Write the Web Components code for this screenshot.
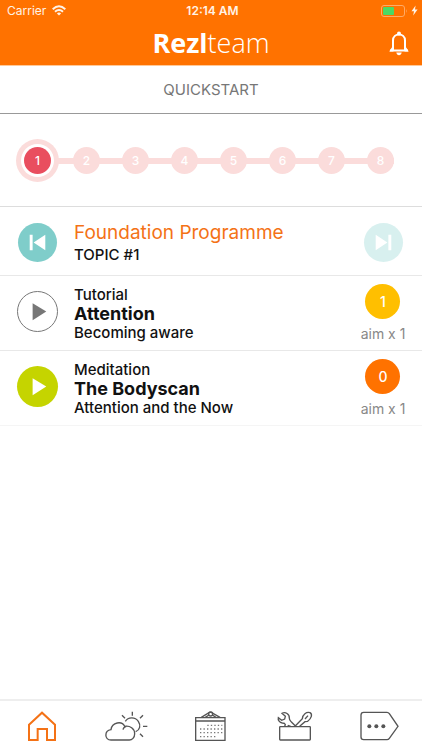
<!DOCTYPE html>
<html lang="en">
<head>
<meta charset="utf-8">
<meta name="viewport" content="width=device-width, initial-scale=1">
<title>Rezl team</title>
<style>
  html, body {
    height: 100%;
    margin: 0;
  }

  body {
    background: #fff;
    color: #111;
    font-family: Inter, "Open Sans", sans-serif;
  }
</style>
</head>
<body>

<rezl-app>
  <rezl-status slot="top" carrier="Carrier" time="12:14 AM"></rezl-status>
  <rezl-header slot="top"></rezl-header>

  <rezl-title>QUICKSTART</rezl-title>
  <rezl-steps count="8" current="1"></rezl-steps>

  <rezl-row topic>
    <rezl-round slot="start" icon="prev" label="Previous topic"></rezl-round>
    <span slot="heading">Foundation Programme</span>
    <span slot="detail">TOPIC #1</span>
    <rezl-round slot="end" icon="next" label="Next topic" faded></rezl-round>
  </rezl-row>

  <rezl-row>
    <rezl-round slot="start" icon="play" label="Play Attention" variant="outline"></rezl-round>
    <span slot="kind">Tutorial</span>
    <span slot="name">Attention</span>
    <span slot="detail">Becoming aware</span>
    <rezl-aim slot="end" count="1" color="#ffbf00">aim x 1</rezl-aim>
  </rezl-row>

  <rezl-row last>
    <rezl-round slot="start" icon="play" label="Play The Bodyscan" variant="lime"></rezl-round>
    <span slot="kind">Meditation</span>
    <span slot="name">The Bodyscan</span>
    <span slot="detail">Attention and the Now</span>
    <rezl-aim slot="end" count="0" color="#ff7200">aim x 1</rezl-aim>
  </rezl-row>

  <rezl-tabs slot="bottom" current="home"></rezl-tabs>
</rezl-app>

<script>
  class RezlElement extends HTMLElement {
    constructor() {
      super();
      this.attachShadow({ mode: 'open' });
    }

    connectedCallback() {
      this.shadowRoot.innerHTML = this.template();
    }
  }

  // Page frame: coloured top, scrolling content, tab bar
  class RezlApp extends RezlElement {
    template() {
      return `
        <style>
          :host {
            display: flex;
            flex-direction: column;
            min-height: 100%;
          }

          header {
            background: #ff7200;
            border-bottom: 1px solid #ffc998;
          }

          main {
            flex: 1;
          }
        </style>
        <header><slot name="top"></slot></header>
        <main><slot></slot></main>
        <slot name="bottom"></slot>
      `;
    }
  }

  class RezlStatus extends RezlElement {
    template() {
      return `
        <style>
          :host {
            display: grid;
            grid-template-columns: 1fr auto 1fr;
            align-items: center;
            height: 21px;
            padding: 0 4px 0 7px;
            color: #fff2e6;
            font-size: 12px;
          }

          .carrier, .power {
            display: flex;
            align-items: center;
            gap: 6px;
          }

          .power {
            justify-content: flex-end;
            gap: 3px;
          }

          .time {
            font-weight: 600;
          }
        </style>
        <span class="carrier">
          ${this.getAttribute('carrier')}
          <svg width="14" height="11" viewBox="0 0 14 11" fill="none" stroke="currentColor" stroke-width="2" aria-hidden="true">
            <path d="M0.7 4.2Q7 -1.6 13.3 4.2M3 6.7Q7 3.2 11 6.7"/>
            <path d="M4.9 8.4Q7 6.7 9.1 8.4L7 10.6Z" fill="currentColor" stroke="none"/>
          </svg>
        </span>
        <span class="time">${this.getAttribute('time')}</span>
        <span class="power">
          <svg width="27" height="12" viewBox="0 0 27 12" aria-hidden="true">
            <rect x="0.5" y="0.5" width="23" height="11" rx="2.5" fill="none" stroke="#ffab66"/>
            <rect x="2" y="2" width="11" height="8" rx="1" fill="#4cd964"/>
            <path d="M25 4Q26.5 6 25 8Z" fill="#ffab66"/>
          </svg>
          <svg width="7" height="11" viewBox="0 0 7 11" fill="currentColor" aria-hidden="true">
            <path d="M4.6 0.5L0.5 6.2H3L2.2 10.5L6.6 4.6H4Z"/>
          </svg>
        </span>
      `;
    }
  }

  class RezlHeader extends RezlElement {
    template() {
      return `
        <style>
          :host {
            display: grid;
            grid-template-columns: 1fr auto 1fr;
            align-items: center;
            height: 44px;
            padding: 0 12px;
            color: #fff;
          }

          .logo {
            grid-column: 2;
            font-family: "Open Sans", sans-serif;
            font-size: 27px;
            font-weight: 300;
            line-height: 44px;
          }

          b {
            font-weight: 700;
          }

          button {
            justify-self: end;
            display: flex;
            padding: 0;
            border: 0;
            background: none;
            color: inherit;
          }
        </style>
        <div class="logo"><b>Rezl</b>team</div>
        <button type="button" aria-label="Notifications">
          <svg width="22" height="25" viewBox="0 0 22 25" fill="none" stroke="currentColor" stroke-width="2">
            <path d="M2 19.5H20M5 19V9.5C5 1.5 17 1.5 17 9.5V19"/>
            <path d="M4.8 15L1.2 20.5H5.5ZM17.2 15L20.8 20.5H16.5Z" fill="currentColor" stroke="none"/>
            <circle cx="11" cy="2.6" r="2" fill="currentColor" stroke="none"/>
            <path d="M8.3 21.6H13.7C13.4 25 8.6 25 8.3 21.6Z" fill="currentColor" stroke="none"/>
          </svg>
        </button>
      `;
    }
  }

  class RezlTitle extends RezlElement {
    template() {
      return `
        <style>
          :host {
            display: block;
            border-bottom: 1px solid #999;
          }

          h1 {
            margin: 0;
            padding-top: 1px;
            color: #777;
            font-size: 15px;
            font-weight: 400;
            line-height: 46px;
            text-align: center;
          }
        </style>
        <h1><slot></slot></h1>
      `;
    }
  }

  class RezlSteps extends RezlElement {
    template() {
      const count   = Number(this.getAttribute('count'));
      const current = Number(this.getAttribute('current'));
      const steps   = Array.from({ length: count }, (_, i) => i + 1);

      return `
        <style>
          :host {
            --step-pale: #fbdcdb;

            display: block;
            padding: 33px 28px 32px 24px;
            border-bottom: 1px solid #ddd;
          }

          ol {
            display: flex;
            justify-content: space-between;
            margin: 0;
            padding: 0;
            background: linear-gradient(var(--step-pale), var(--step-pale)) center / 100% 6px no-repeat;
            list-style: none;
          }

          button {
            display: block;
            width: 27px;
            height: 27px;
            padding: 0;
            border: 0;
            border-radius: 50%;
            background: var(--step-pale);
            color: #fff;
            font: 500 12px/27px Inter, sans-serif;
          }

          button[aria-current] {
            background: #e94e5f;
            box-shadow: 0 0 0 3px #fff, 0 0 0 8px var(--step-pale);
          }
        </style>
        <ol>
          ${steps.map((n) => `
            <li><button type="button" ${n === current ? 'aria-current="step"' : ''}>${n}</button></li>
          `).join('')}
        </ol>
      `;
    }
  }

  class RezlRow extends RezlElement {
    template() {
      return `
        <style>
          :host {
            display: grid;
            grid-template-columns: 42px 1fr 46px;
            align-items: center;
            column-gap: 16px;
            padding: 8px 16px 7px;
            border-bottom: 1px solid #e8e8e8;
          }

          :host([topic]) {
            padding: 14px 16px 11px;
          }

          :host([last]) {
            border-color: #f5f5f5;
          }

          .text {
            display: grid;
            font-size: 15px;
            font-weight: 500;
            line-height: 19px;
          }

          slot[name="heading"] {
            color: #f47216;
            font-size: 19px;
            font-weight: 400;
            line-height: 24px;
          }

          slot[name="name"] {
            font-size: 18px;
            font-weight: 700;
          }

          ::slotted([slot="start"]), ::slotted([slot="end"]) {
            justify-self: center;
          }
        </style>
        <slot name="start"></slot>
        <div class="text">
          <slot name="kind"></slot>
          <slot name="heading"></slot>
          <slot name="name"></slot>
          <slot name="detail"></slot>
        </div>
        <slot name="end"></slot>
      `;
    }
  }

  const ROUND_ICONS = {
    play: '<path d="M15 11.5L29 20L15 29Z"/>',
    prev: '<path d="M12 12H15V28H12ZM28 12V28L16 20Z"/>',
    next: '<path d="M25 12H28V28H25ZM12 12V28L24 20Z"/>',
  };

  class RezlRound extends RezlElement {
    template() {
      return `
        <style>
          :host {
            display: block;
          }

          :host([variant]) {
            padding-bottom: 4px;
          }

          button {
            box-sizing: border-box;
            display: grid;
            place-items: center;
            width: 39px;
            height: 39px;
            padding: 0;
            border: 0;
            border-radius: 50%;
            background: #7fcdca;
            color: #fff;
          }

          :host([variant]) button {
            width: 41px;
            height: 41px;
          }

          :host([variant="outline"]) button {
            border: 1px solid #777;
            background: #fff;
            color: #777;
          }

          :host([variant="lime"]) button {
            background: #c5d400;
          }

          :host([faded]) button {
            background: #d8f0ef;
          }
        </style>
        <button type="button" aria-label="${this.getAttribute('label')}">
          <svg width="39" height="39" viewBox="0 0 40 40" fill="currentColor">${ROUND_ICONS[this.getAttribute('icon')]}</svg>
        </button>
      `;
    }
  }

  class RezlAim extends RezlElement {
    template() {
      return `
        <style>
          :host {
            display: grid;
            justify-items: center;
            gap: 6px;
            color: #888;
            font-size: 14px;
            line-height: 18px;
            white-space: nowrap;
          }

          .count {
            width: 35px;
            border-radius: 50%;
            background: ${this.getAttribute('color')};
            color: #fff;
            font-size: 14px;
            font-weight: 500;
            line-height: 35px;
            text-align: center;
          }
        </style>
        <span class="count">${this.getAttribute('count')}</span>
        <span><slot></slot></span>
      `;
    }
  }

  // Icons are drawn on a grid three times their display size
  const TABS = [
    {
      id: 'home', label: 'Home', width: 28, height: 30,
      art: '<path d="M3 41L42 5L81 41V87H57V54H29V87H3Z" stroke-width="6"/>',
    },
    {
      id: 'weather', label: 'Weather', width: 43, height: 30,
      art: `
        <path d="M18 87C-2 87 -3 59 18 56C21 33 51 29 59 46C75 43 89 53 89 68C89 80 81 87 73 87Z"/>
        <path d="M54 56C55 50 59 47 64 46M61 31C69 17 91 17 100 31C108 43 105 57 92 62"/>
        <path d="M82 2V14M51 13L60 22M114 13L105 22M114 46H127M105 68L114 77"/>
      `,
    },
    {
      id: 'calendar', label: 'Calendar', width: 31, height: 30,
      art: `
        <path d="M2 20H90V88H2ZM2 30H90M19 19L43 4H49L75 19M31 19L42 12M63 19L52 12"/>
        <circle cx="47" cy="9" r="6"/>
        <path d="M37 43H82M15 54H82M15 65H82M15 77H62" stroke-width="4" stroke-dasharray="4 6.5" opacity="0.8"/>
      `,
    },
    {
      id: 'tools', label: 'Tools', width: 36, height: 30,
      art: `
        <rect x="8" y="47" width="92" height="40" rx="2"/>
        <path d="M23 46L25 41C24 37 20 36 16 36C8 35 2 28 4 20L14 28L23 24L25 16L15 7C25 1 38 9 37 22C37 28 41 30 44 34L56 46"/>
        <path d="M33 46L34 44L41 46M54 46L76 23C77 10 88 2 99 5C107 10 104 21 92 31L84 32L68 46M84 24L93 14"/>
      `,
    },
    {
      id: 'more', label: 'More', width: 39, height: 30,
      art: `
        <path d="M11 4H81C84 4 86 5 88 8L114 46L88 82C86 85 84 86 81 86H11C6 86 3 83 3 78V12C3 7 6 4 11 4Z"/>
        <g fill="currentColor" stroke="none">
          <circle cx="28" cy="46" r="6"/><circle cx="49" cy="46" r="6"/><circle cx="70" cy="46" r="6"/>
        </g>
      `,
    },
  ];

  class RezlTabs extends RezlElement {
    template() {
      const current = this.getAttribute('current');

      return `
        <style>
          :host {
            display: block;
            position: sticky;
            bottom: 0;
            border-top: 2px solid #eee;
            background: #fff;
          }

          nav {
            display: grid;
            grid-template-columns: repeat(5, 1fr);
          }

          a {
            display: grid;
            place-items: center;
            height: 49px;
            color: #555;
          }

          a[aria-current] {
            color: #f47216;
          }
        </style>
        <nav>
          ${TABS.map((tab) => `
            <a href="#${tab.id}" aria-label="${tab.label}" ${tab.id === current ? 'aria-current="page"' : ''}>
              <svg width="${tab.width}" height="${tab.height}" viewBox="0 0 ${tab.width * 3} ${tab.height * 3}"
                fill="none" stroke="currentColor" stroke-width="4">${tab.art}</svg>
            </a>
          `).join('')}
        </nav>
      `;
    }
  }

  customElements.define('rezl-app', RezlApp);
  customElements.define('rezl-status', RezlStatus);
  customElements.define('rezl-header', RezlHeader);
  customElements.define('rezl-title', RezlTitle);
  customElements.define('rezl-steps', RezlSteps);
  customElements.define('rezl-row', RezlRow);
  customElements.define('rezl-round', RezlRound);
  customElements.define('rezl-aim', RezlAim);
  customElements.define('rezl-tabs', RezlTabs);
</script>
</body>
</html>
